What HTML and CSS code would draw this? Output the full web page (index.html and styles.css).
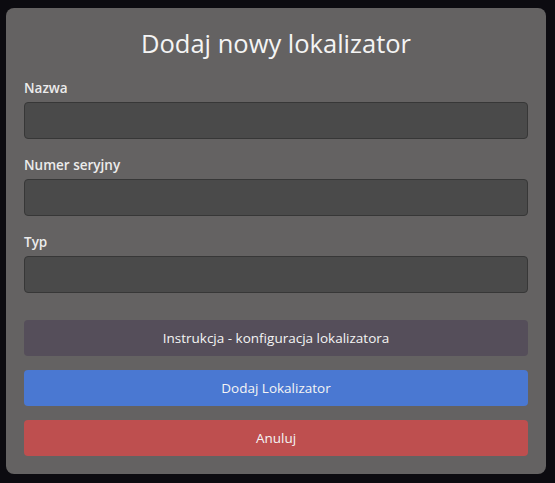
FILE: index.html
```html
<!DOCTYPE html>
<html lang="pl">
<head>
<meta charset="utf-8">
<link rel="stylesheet" href="styles.css">
</head>
<body>
<div class="card">
  <h1 class="title">Dodaj nowy lokalizator</h1>
  <div class="field">
    <label class="label">Nazwa</label>
    <input class="input" type="text">
  </div>
  <div class="field">
    <label class="label">Numer seryjny</label>
    <input class="input" type="text">
  </div>
  <div class="field">
    <label class="label">Typ</label>
    <input class="input" type="text">
  </div>
  <div class="buttons">
    <button class="btn btn-info">Instrukcja - konfiguracja lokalizatora</button>
    <button class="btn btn-primary">Dodaj Lokalizator</button>
    <button class="btn btn-danger">Anuluj</button>
  </div>
</div>
</body>
</html>
```
FILE: styles.css
```css
html, body {
  margin: 0;
  padding: 0;
  background: #0c0b10;
  font-family: "Open Sans", "Noto Sans", sans-serif;
}
body {
  padding: 8px 9px 9px 6px;
}
.card {
  box-sizing: border-box;
  width: 540px;
  height: 466px;
  background: #646262;
  border-radius: 8px;
  padding: 18px 18px 18px 18px;
}
.title {
  margin: 0 0 18px;
  text-align: center;
  font-size: 25.5px;
  font-weight: 400;
  line-height: 34px;
  color: #f4f4f4;
}
.field {
  display: flex;
  flex-direction: column;
  margin-bottom: 16px;
}
.label {
  font-size: 13.5px;
  font-weight: 600;
  color: #ececec;
  line-height: 20px;
  margin-bottom: 4px;
}
.input {
  box-sizing: border-box;
  height: 37px;
  width: 100%;
  margin: 0;
  background: #4a4a4a;
  border: 1px solid #373737;
  border-radius: 4px;
  outline: none;
}
.buttons {
  display: flex;
  flex-direction: column;
  gap: 14px;
  margin-top: 27px;
}
.btn {
  height: 36px;
  border: none;
  border-radius: 4px;
  color: #f4f4f4;
  font-family: "Open Sans", "Noto Sans", sans-serif;
  font-size: 13.5px;
  cursor: pointer;
}
.btn-info { background: #554e5a; }
.btn-primary { background: #4a78d2; }
.btn-danger { background: #be4f4f; }
```
